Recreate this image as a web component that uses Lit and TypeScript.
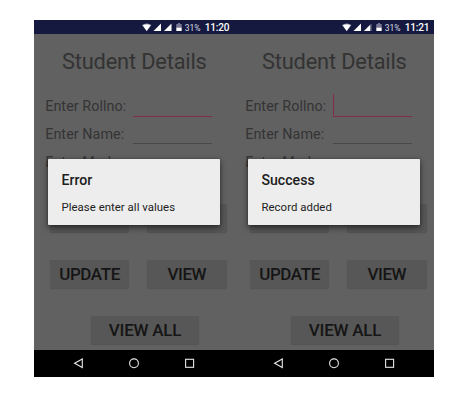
import { LitElement, html, css, svg } from "lit";
import { customElement, property } from "lit/decorators.js";

@customElement("status-bar")
class StatusBar extends LitElement {
  @property() time = "";
  @property({ type: Boolean }) weak = false;
  static styles = css`
    :host { display: flex; height: 14px; background: #15193f; color: #fff; justify-content: flex-end; align-items: center; padding-right: 4.2px; box-sizing: border-box; width: 200px; }
    svg { display: block; width: 42px; height: 14px; }
    .pct { font-size: 8.5px; line-height: 14px; width: 20px; margin-left: 1px; color: #d8d9e2; white-space: nowrap; padding-top: 1px; }
    .time { font-size: 10.1px; font-weight: 500; line-height: 14px; width: 25px; white-space: nowrap; letter-spacing: -0.22px; padding-top: 1px; }
  `;
  render() {
    const last = this.weak
      ? svg`<path d="M29.5 11H22L29.5 3.5Z" fill="#777a92"/><path d="M28 11H22L28 5Z" fill="#fff"/>`
      : svg`<path d="M29.5 11H22L29.5 3.5Z" fill="#fff"/>`;
    return html`
      <svg viewBox="0 0 42 14">
        <path d="M0 5Q4.7 1.9 9.4 5L4.7 11Z" fill="#a5a7b8"/>
        <path d="M1 5.4Q4.7 3.8 8.4 5.4L4.7 11Z" fill="#fff"/>
        <path d="M19 11H11.5L19 3.5Z" fill="#fff"/>
        ${last}
        <path d="M34.3 4H36V3H38V4H39.7V7.5H34.3Z" fill="#777a92"/>
        <path d="M34.3 7.5H39.7V11H34.3Z" fill="#fff"/>
      </svg>
      <span class="pct">31%</span><span class="time">${this.time}</span>`;
  }
}

@customElement("phone-screen")
class PhoneScreen extends LitElement {
  @property() time = "";
  @property() heading = "";
  @property() message = "";
  @property({ type: Boolean }) weak = false;
  @property({ type: Boolean }) cursor = false;
  static styles = css`
    :host { display: flex; flex-direction: column; position: relative; width: 200px; height: 357px; background: #616161; overflow: hidden; }
    .content { height: 316.4px; flex: none; display: flex; flex-direction: column; }
    h1 { margin: 13.5px 0 18.5px 28px; font-size: 21.8px; line-height: 28px; font-weight: 400; letter-spacing: -0.17px; color: #333; white-space: nowrap; }
    .row { display: flex; height: 28px; flex: none; padding-left: 11.2px; }
    .label { width: 88px; font-size: 14.3px; line-height: 24px; letter-spacing: 0.08px; color: #343434; white-space: nowrap; }
    .field { width: 79px; height: 22px; border-bottom: 1px solid #484848; box-sizing: border-box; }
    .field.focus { border-bottom: 1px solid #822e4b; height: 23px; }
    .field.caret { border-left: 1px solid #822e4b; }
    .buttons { display: flex; gap: 17.6px; padding-left: 15.7px; margin-top: 27.7px; }
    .buttons.first { margin-top: 26.3px; }
    .buttons.all { padding-left: 57.4px; }
    .btn { width: 79.7px; height: 28px; border-radius: 1.5px; background: #575757; box-shadow: 0 1px 1px rgba(0,0,0,.15); display: flex; align-items: center; justify-content: center; font-size: 17px; font-weight: 500; letter-spacing: -0.4px; line-height: 28px; color: #151515; white-space: nowrap; }
    .all .btn { width: 107.3px; letter-spacing: -0.22px; }
    .dialog { position: absolute; left: 14px; top: 139px; width: 172px; height: 65.5px; background: #ededed; box-shadow: 0 3px 6px rgba(0,0,0,.5), 0 0 3px rgba(0,0,0,.25); box-sizing: border-box; padding: 11px 0 0 13.5px; border-radius: 1px; }
    .heading { font-size: 14.1px; line-height: 20px; font-weight: 500; color: #202020; }
    .message { font-size: 11.4px; line-height: 16px; margin-top: 9px; letter-spacing: 0.03px; color: #222; white-space: nowrap; }
    nav { flex: 1; background: #000; }
    nav svg { display: block; width: 200px; height: 27px; }
  `;
  render() {
    return html`
      <status-bar time=${this.time} ?weak=${this.weak}></status-bar>
      <div class="content">
        <h1>Student Details</h1>
        <div class="row"><span class="label">Enter Rollno:</span><div class="field focus ${this.cursor ? "caret" : ""}"></div></div>
        <div class="row"><span class="label">Enter Name:</span><div class="field"></div></div>
        <div class="row"><span class="label">Enter Marks:</span><div class="field"></div></div>
        <div class="buttons first"><div class="btn"></div><div class="btn"></div></div>
        <div class="buttons"><div class="btn">UPDATE</div><div class="btn">VIEW</div></div>
        <div class="buttons all"><div class="btn">VIEW ALL</div></div>
      </div>
      <nav>
        <svg viewBox="0 0 200 27" fill="none" stroke="#e8e8e8" stroke-width="1.1">
          <path d="M48.3 9V17.6L40.6 13.3Z"/>
          <circle cx="100" cy="13.3" r="4.4"/>
          <rect x="151.6" y="9.3" width="8" height="8"/>
        </svg>
      </nav>
      <div class="dialog">
        <div class="heading">${this.heading}</div>
        <div class="message">${this.message}</div>
      </div>`;
  }
}

@customElement("app-root")
class AppRoot extends LitElement {
  static styles = css`
    :host { display: flex; width: 450px; height: 400px; box-sizing: border-box; padding: 20px 0 0 34px; background: #fff; font-family: Roboto, sans-serif; }
  `;
  render() {
    return html`
      <phone-screen time="11:20" heading="Error" message="Please enter all values"></phone-screen>
      <phone-screen time="11:21" heading="Success" message="Record added" weak cursor></phone-screen>`;
  }
}
